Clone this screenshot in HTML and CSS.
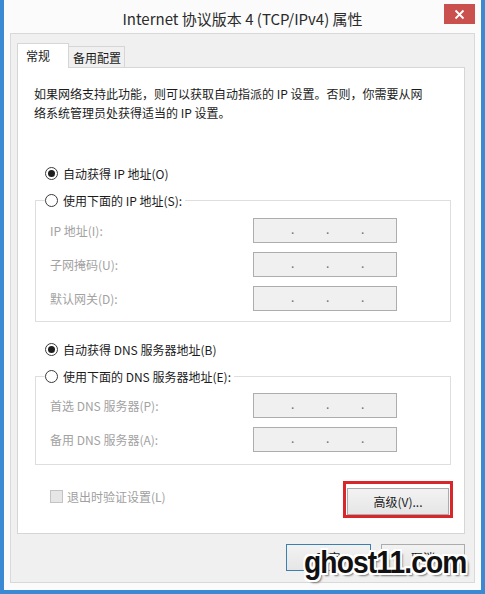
FILE: index.html
```html
<!DOCTYPE html>
<html lang="zh-CN">
<head>
<meta charset="utf-8">
<title>Internet 协议版本 4 (TCP/IPv4) 属性</title>
<link rel="stylesheet" href="styles.css">
</head>
<body>
<div class="window">
  <div class="titlebar">
    <span class="title">Internet 协议版本 4 (TCP/IPv4) 属性</span>
    <div class="close">
      <svg width="11" height="11" viewBox="0 0 11 11"><path d="M1.5 1.5 L9.5 9.5 M9.5 1.5 L1.5 9.5" stroke="#fff" stroke-width="1.8" fill="none"/></svg>
    </div>
  </div>
  <div class="client">
    <div class="tabs">
      <div class="tab active">常规</div>
      <div class="tab">备用配置</div>
    </div>
    <div class="panel">
      <p class="intro">如果网络支持此功能，则可以获取自动指派的 IP 设置。否则，你需要从网<br>络系统管理员处获得适当的 IP 设置。</p>

      <div class="radio-row first">
        <span class="radio checked"></span><span>自动获得 IP 地址(O)</span>
      </div>
      <div class="group">
        <div class="legend"><span class="radio"></span><span>使用下面的 IP 地址(S):</span></div>
        <div class="fields">
          <span class="label">IP 地址(I):</span>
          <span class="ipbox"><i>.</i><i>.</i><i>.</i></span>
          <span class="label">子网掩码(U):</span>
          <span class="ipbox"><i>.</i><i>.</i><i>.</i></span>
          <span class="label">默认网关(D):</span>
          <span class="ipbox"><i>.</i><i>.</i><i>.</i></span>
        </div>
      </div>

      <div class="radio-row">
        <span class="radio checked"></span><span>自动获得 DNS 服务器地址(B)</span>
      </div>
      <div class="group dns">
        <div class="legend"><span class="radio"></span><span>使用下面的 DNS 服务器地址(E):</span></div>
        <div class="fields">
          <span class="label">首选 DNS 服务器(P):</span>
          <span class="ipbox"><i>.</i><i>.</i><i>.</i></span>
          <span class="label">备用 DNS 服务器(A):</span>
          <span class="ipbox"><i>.</i><i>.</i><i>.</i></span>
        </div>
      </div>

      <div class="bottom-row">
        <div class="check-row"><span class="checkbox"></span><span>退出时验证设置(L)</span></div>
        <div class="highlight"><button class="btn adv">高级(V)...</button></div>
      </div>
    </div>
    <div class="buttons">
      <button class="btn ok">确定</button>
      <button class="btn cancel">取消</button>
    </div>
  </div>
  <div class="watermark">ghost11.com</div>
</div>
</body>
</html>
```

FILE: styles.css
```css
* { box-sizing: border-box; }
html, body { margin: 0; padding: 0; }
body {
  width: 485px;
  height: 594px;
  overflow: hidden;
  font-family: "Noto Sans CJK SC", "Noto Sans", sans-serif;
  font-size: 12px;
  color: #1b1b1b;
}
.window {
  position: relative;
  width: 485px;
  height: 594px;
  background: #fbfbfb;
  border-left: 4px solid #3b88d3;
  border-right: 4px solid #3b88d3;
  border-bottom: 4px solid #3b88d3;
  padding: 0 6px 7px;
  display: flex;
  flex-direction: column;
}
.titlebar {
  height: 33px;
  flex: none;
  margin: 0 -6px;
  display: grid;
  grid-template-columns: 1fr auto 1fr;
  align-items: start;
}
.title {
  grid-column: 2;
  font-size: 15px;
  line-height: 20px;
  margin-top: 9px;
  color: #2b2b2b;
  white-space: nowrap;
}
.close {
  grid-column: 3;
  justify-self: end;
  margin: 4px 6px 0 0;
  width: 31px;
  height: 20px;
  background: #c9504c;
  display: flex;
  align-items: center;
  justify-content: center;
}
.client {
  flex: 1;
  background: #f0f0f0;
  border: 1px solid #d9d9d9;
  padding: 9px 9px 0 6px;
}
.tabs {
  display: flex;
  align-items: flex-end;
  margin-bottom: -1px;
  position: relative;
  z-index: 1;
}
.tab {
  height: 21px;
  width: 56px;
  margin-bottom: 1px;
  padding-left: 4px;
  line-height: 21px;
  border: 1px solid #d6d6d6;
  border-bottom: none;
  background: #f0f0f0;
  border-left: none;
}
.tab.active {
  width: 52px;
  height: 25px;
  margin-bottom: 0;
  padding-left: 8px;
  line-height: 24px;
  background: #fff;
  border-left: 1px solid #d6d6d6;
}
.panel {
  background: #fff;
  border: 1px solid #d6d6d6;
  padding: 16px 11px 15px 16px;
}
.intro {
  margin: 0;
  line-height: 19px;
  white-space: nowrap;
}
.radio-row {
  display: flex;
  align-items: center;
  height: 19px;
  margin: 18px 0 0 11px;
  gap: 5px;
}
.radio-row.first { margin-top: 42px; }
.radio {
  width: 13px;
  height: 13px;
  border: 1px solid #3a3a3a;
  border-radius: 50%;
  background: #fff;
  display: inline-flex;
  align-items: center;
  justify-content: center;
  flex: none;
}
.radio.checked::after {
  content: "";
  width: 7px;
  height: 7px;
  border-radius: 50%;
  background: #1e1e1e;
}
.group {
  margin: 17px 0 0 1px;
  width: 416px;
  border: 1px solid #dedede;
  padding: 0 0 10px 14px;
}
.group.dns { padding-bottom: 12px; }
.legend {
  display: flex;
  width: fit-content;
  align-items: center;
  gap: 5px;
  height: 19px;
  margin: -10px 0 0 -5px;
  padding: 0 3px 0 0;
  background: #fff;
}
.fields {
  display: grid;
  grid-template-columns: 203px 144px;
  row-gap: 9px;
  margin-top: 8px;
  align-items: center;
}
.dns .fields { margin-top: 7px; }
.label { color: #a2a2a2; }
.ipbox {
  height: 25px;
  background: #f0f0f0;
  border: 1px solid #adadad;
  display: flex;
  align-items: center;
  padding-left: 37px;
  gap: 32px;
}
.ipbox i {
  font-style: normal;
  color: #6f6f6f;
  width: 3px;
  line-height: 10px;
  margin-top: -4px;
}
.bottom-row {
  display: flex;
  justify-content: space-between;
  align-items: flex-start;
  margin-top: 16px;
}
.check-row {
  display: flex;
  align-items: center;
  gap: 4px;
  height: 19px;
  margin: 6px 0 0 16px;
  color: #a0a0a0;
}
.checkbox {
  width: 13px;
  height: 13px;
  border: 1px solid #c3c3c3;
  background: #e6e6e6;
}
.highlight {
  border: 3px solid #d9262b;
  padding: 4px 1px 0;
}
.btn {
  display: block;
  font: inherit;
  color: #1b1b1b;
  height: 27px;
  border: 1px solid #acacac;
  background: linear-gradient(#f2f2f2, #e6e6e6);
  padding: 0;
}
.btn.adv { width: 102px; }
.buttons {
  display: flex;
  justify-content: flex-end;
  gap: 10px;
  margin-top: 10px;
}
.btn.ok { width: 85px; border-color: #3c7fb1; }
.btn.cancel { width: 84px; }
.watermark {
  position: absolute;
  left: 300px;
  top: 544px;
  font-family: "Liberation Sans", Arial, sans-serif;
  font-weight: bold;
  font-size: 32px;
  line-height: 36px;
  letter-spacing: -1px;
  color: #111;
  transform: scaleX(0.88);
  transform-origin: left top;
  text-shadow:
    2px 0 0 #fff, -2px 0 0 #fff, 0 2px 0 #fff, 0 -2px 0 #fff,
    2px 2px 0 #fff, -2px -2px 0 #fff, 2px -2px 0 #fff, -2px 2px 0 #fff,
    3px 3px 2px #777;
}
```
